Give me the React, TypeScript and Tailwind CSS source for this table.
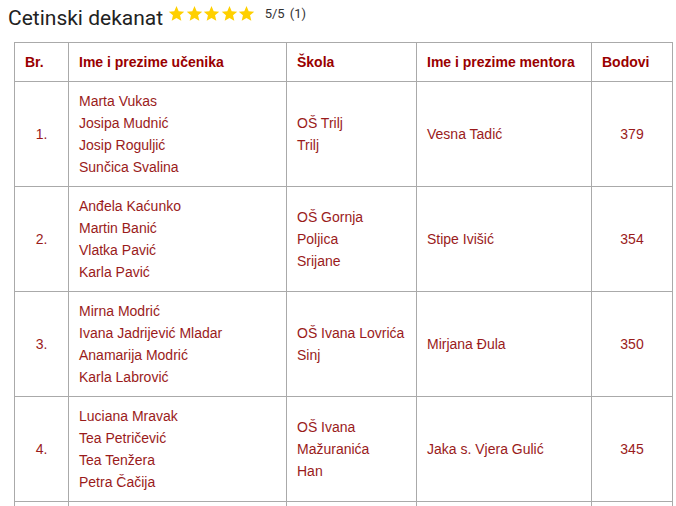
const rows = [
  {
    br: "1.",
    students: ["Marta Vukas", "Josipa Mudnić", "Josip Roguljić", "Sunčica Svalina"],
    school: ["OŠ Trilj", "Trilj"],
    mentor: "Vesna Tadić",
    points: 379,
  },
  {
    br: "2.",
    students: ["Anđela Kaćunko", "Martin Banić", "Vlatka Pavić", "Karla Pavić"],
    school: ["OŠ Gornja", "Poljica", "Srijane"],
    mentor: "Stipe Ivišić",
    points: 354,
  },
  {
    br: "3.",
    students: ["Mirna Modrić", "Ivana Jadrijević Mladar", "Anamarija Modrić", "Karla Labrović"],
    school: ["OŠ Ivana Lovrića", "Sinj"],
    mentor: "Mirjana Đula",
    points: 350,
  },
  {
    br: "4.",
    students: ["Luciana Mravak", "Tea Petričević", "Tea Tenžera", "Petra Čačija"],
    school: ["OŠ Ivana", "Mažuranića", "Han"],
    mentor: "Jaka s. Vjera Gulić",
    points: 345,
  },
];

const Star = () => (
  <svg viewBox="0 0 24 24" className="h-[17px] w-[17px]" fill="#ffd000">
    <path d="M12 1.5l3.1 7.2 7.8.7-5.9 5.2 1.8 7.7L12 18.2l-6.8 4.1 1.8-7.7L1.1 9.4l7.8-.7z" />
  </svg>
);

export default function App() {
  return (
    <div className="bg-white min-h-screen pl-2 pt-[4px] font-['Liberation_Sans',Arial,sans-serif]">
      {/* Title */}
      <div className="flex items-start">
        <h1 className="font-['Roboto',sans-serif] text-[21px] leading-[28px] text-[#222]">
          Cetinski dekanat
        </h1>
        <div className="flex items-center ml-[5px] gap-[0.5px]">
          <Star />
          <Star />
          <Star />
          <Star />
          <Star />
          <span className="ml-[9px] font-['Roboto',sans-serif] text-[13px] text-[#333]">
            5/5 <span className="ml-[2px]">(1)</span>
          </span>
        </div>
      </div>

      <table className="ml-[6px] mt-[10px] w-[658px] table-fixed border-collapse text-[14px] leading-[22px] text-[#9a1b1b]">
        <colgroup>
          <col className="w-[54px]" />
          <col className="w-[218px]" />
          <col className="w-[130px]" />
          <col className="w-[175px]" />
          <col className="w-[81px]" />
        </colgroup>
        <thead>
          <tr className="text-[#990000] font-bold">
            <th className="border border-[#aaa] px-[10px] py-[8px] text-left">Br.</th>
            <th className="border border-[#aaa] px-[10px] py-[8px] text-left">Ime i prezime učenika</th>
            <th className="border border-[#aaa] px-[10px] py-[8px] text-left">Škola</th>
            <th className="border border-[#aaa] px-[10px] py-[8px] text-left">Ime i prezime mentora</th>
            <th className="border border-[#aaa] px-[10px] py-[8px] text-left">Bodovi</th>
          </tr>
        </thead>
        <tbody>
          {rows.map((row) => (
            <tr key={row.br}>
              <td className="border border-[#aaa] px-[10px] py-[8px] text-center align-middle">{row.br}</td>
              <td className="border border-[#aaa] px-[10px] py-[8px] align-middle">
                {row.students.map((s) => (
                  <div key={s}>{s}</div>
                ))}
              </td>
              <td className="border border-[#aaa] px-[10px] py-[8px] align-middle">
                {row.school.map((s) => (
                  <div key={s}>{s}</div>
                ))}
              </td>
              <td className="border border-[#aaa] px-[10px] py-[8px] align-middle">{row.mentor}</td>
              <td className="border border-[#aaa] px-[10px] py-[8px] text-center align-middle">{row.points}</td>
            </tr>
          ))}
          <tr className="h-[105px]">
            <td className="border border-[#aaa]"></td>
            <td className="border border-[#aaa]"></td>
            <td className="border border-[#aaa]"></td>
            <td className="border border-[#aaa]"></td>
            <td className="border border-[#aaa]"></td>
          </tr>
        </tbody>
      </table>
    </div>
  );
}
